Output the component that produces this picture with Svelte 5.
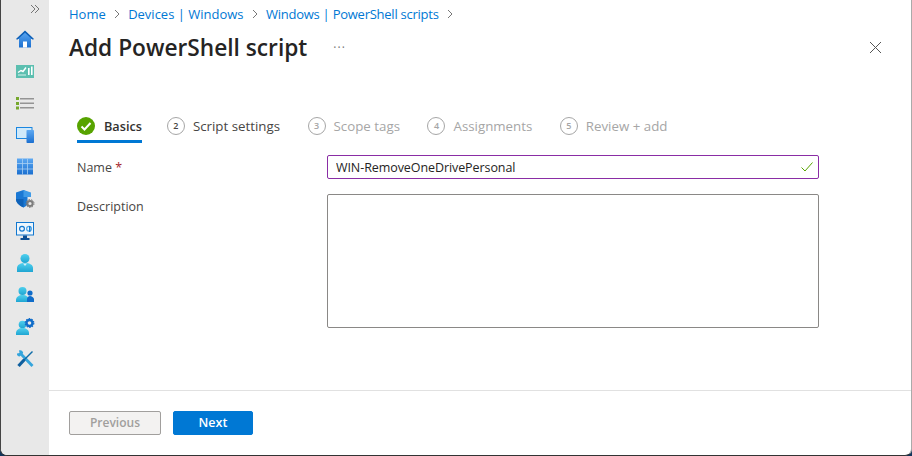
<script>
	const crumbs = [
		{ text: 'Home', long: false },
		{ text: 'Devices | Windows', long: false },
		{ text: 'Windows | PowerShell scripts', long: true }
	];
	const steps = [
		{ n: 2, label: 'Script settings', state: 'upcoming' },
		{ n: 3, label: 'Scope tags', state: 'off' },
		{ n: 4, label: 'Assignments', state: 'off' },
		{ n: 5, label: 'Review + add', state: 'off' }
	];
</script>

<div class="window">
	<nav class="rail">
		<svg class="collapse" width="10" height="10" viewBox="0 0 10 10" fill="none" stroke="#666" stroke-width="0.9"><path d="M1 1l4 4-4 4M5 1l4 4-4 4" /></svg>
		<ul>
			<li><svg viewBox="0 0 18 18" width="18" height="18">
				<defs>
					<linearGradient id="blue" x1="0" y1="0" x2="0" y2="1"><stop offset="0" stop-color="#5ea9f2" /><stop offset="1" stop-color="#1a6fd0" /></linearGradient>
					<linearGradient id="cyan" x1="0" y1="0" x2="0" y2="1"><stop offset="0" stop-color="#4fd0ee" /><stop offset="1" stop-color="#1fa5d2" /></linearGradient>
				</defs>
				<path d="M9 1L0.500 9h2.500v8.500h12V9h2.500z" fill="url(#blue)" /><path d="M9 0.500L0 9l1.200 .8L9 2.800l7.800 7L18 9z" fill="#0f5fb5" /><rect x="7" y="11.500" width="4" height="6" fill="#fff" /></svg></li>
			<li><svg viewBox="0 0 18 18" width="18" height="18"><g transform="translate(0 3)"><rect y="0" width="18" height="13" fill="#5cbfb0" /><path d="M2 7.500l3-2 2 1 3-4" stroke="#fff" fill="none" stroke-width="1.400" /><rect x="12" y="3" width="1.600" height="7" fill="#fff" /><rect x="15" y="1.500" width="1.600" height="8.500" fill="#fff" /><rect x="2" y="9.500" width="8" height="1" fill="#d8f1ec" /></g></svg></li>
			<li><svg viewBox="0 0 18 18" width="18" height="18"><rect x="0" y="3" width="3" height="3" fill="#76a82e" /><rect x="0" y="8" width="3" height="3" fill="#76a82e" /><rect x="0" y="12.500" width="3" height="3" fill="#76a82e" /><rect x="4" y="4" width="14" height="1.500" fill="#949494" /><rect x="4" y="8.500" width="14" height="1.500" fill="#949494" /><rect x="4" y="13" width="14" height="1.500" fill="#949494" /></svg></li>
			<li><svg viewBox="0 0 18 18" width="18" height="18"><rect x="0.500" y="1.500" width="15.500" height="11" fill="#cfe9fa" stroke="#1a86e0" /><rect x="10.500" y="4" width="7.500" height="13" rx="0.800" fill="url(#blue)" /></svg></li>
			<li><svg viewBox="0 0 18 18" width="18" height="18"><rect x="1" y="0.500" width="16" height="16" fill="url(#blue)" /><path d="M6.500 0.500v16M11.500 0.500v16M1 5.500h16M1 11h16" stroke="#a9cff2" stroke-width="0.800" /></svg></li>
			<li><svg viewBox="0 0 18 18" width="18" height="18"><path d="M7.500 0L0 2.500v6.500c0 4 3.500 6.500 7.500 8.500 1.500-.8 3-1.800 4-3V2z" fill="#1a78d4" /><path d="M7.500 0L15 2.500v4.500H7.500z" fill="#3f9be8" /><path d="M0 9h7.500v8.500C3.500 15.500 0 13 0 9z" fill="#0f62b8" /><circle cx="14" cy="13.500" r="2.600" fill="none" stroke="#7d7d7d" stroke-width="2" /><circle cx="14" cy="13.500" r="4" fill="none" stroke="#7d7d7d" stroke-width="1" stroke-dasharray="1.500 1.300" /></svg></li>
			<li><svg viewBox="0 0 18 18" width="18" height="18"><rect x="0.500" y="0.500" width="17" height="12.500" fill="#eef6fc" stroke="#1278d0" /><circle cx="6" cy="6.800" r="2.400" fill="none" stroke="#1278d0" stroke-width="1.200" /><circle cx="13" cy="6.800" r="2.400" fill="none" stroke="#4ca5e8" stroke-width="1.200" /><rect x="13" y="4" width="1.400" height="6" fill="#1278d0" /><path d="M7 13.500h4v2.500h2.500v2h-9v-2H7z" fill="#0c4f94" /></svg></li>
			<li><svg viewBox="0 0 18 18" width="18" height="18"><circle cx="9" cy="4.500" r="4.500" fill="url(#cyan)" /><path d="M1 18v-4c0-3 3-5 8-5s8 2 8 5v4z" fill="url(#cyan)" /><path d="M7 9.500l2 2.500 2-2.500z" fill="#d5f1f9" /></svg></li>
			<li><svg viewBox="0 0 18 18" width="18" height="18"><circle cx="6.500" cy="5" r="4" fill="url(#cyan)" /><path d="M0 16v-2c0-3 3-5 6.500-5s6.500 2 6.500 5v2z" fill="url(#cyan)" /><circle cx="14" cy="7" r="2.600" fill="#0f6cc9" /><path d="M11 16v-3c0-1.500 1.500-3 3-3s4 1.500 4 3v3z" fill="#0f6cc9" /></svg></li>
			<li><svg viewBox="0 0 18 18" width="18" height="18"><circle cx="6.500" cy="6.500" r="3.800" fill="url(#cyan)" /><path d="M0 17v-2c0-3 3-5 6.500-5s6.500 2 6.500 5v2z" fill="url(#cyan)" /><circle cx="13.500" cy="5" r="3" fill="none" stroke="#0f6cc9" stroke-width="2.400" /><circle cx="13.500" cy="5" r="4.300" fill="none" stroke="#0f6cc9" stroke-width="1.200" stroke-dasharray="1.500 1.200" /></svg></li>
			<li><svg viewBox="0 0 18 18" width="18" height="18"><path d="M4 3l12.500 13" stroke="#35a5dc" stroke-width="2.800" /><path d="M1 3.500l2.500-.5L3 .5c2-.8 4 .5 4.200 2.500l-3.500 3.500C1.800 6.500 .5 5 1 3.500z" fill="#35a5dc" /><path d="M16.500 1.500L8 10" stroke="#0f6ca8" stroke-width="1.400" /><path d="M8.500 9.500L2.500 16" stroke="#0f5f9e" stroke-width="3.200" /></svg></li>
		</ul>
	</nav>

	<main class="pane">
		<div class="head">
			<div class="crumbs">
				{#each crumbs as c}
					<span class="crumb" class:long={c.long}>{c.text}</span>
					<svg class="sep" width="6" height="10" viewBox="0 0 6 10" fill="none" stroke="#777"><path d="M1 1l4 4-4 4" /></svg>
				{/each}
			</div>
			<div class="title-row">
				<h1>Add PowerShell script</h1>
				<span class="more">···</span>
				<svg class="close" width="13" height="13" viewBox="0 0 13 13" stroke="#555" fill="none"><path d="M1 1l11 11M12 1L1 12" /></svg>
			</div>
		</div>

		<div class="tabs">
			<div class="tab active">
				<svg width="18" height="18" viewBox="0 0 18 18"><circle cx="9" cy="9" r="9" fill="#57a300" /><path d="M4.500 9.500l3 3 6-6.500" stroke="#fff" stroke-width="2" fill="none" /></svg>
				<span>Basics</span>
			</div>
			{#each steps as s}
				<div class="tab {s.state}">
					<span class="num">{s.n}</span>
					<span>{s.label}</span>
				</div>
			{/each}
		</div>

		<div class="form">
			<div class="row name-row">
				<label for="name">Name <span class="req">*</span></label>
				<div class="input">
					<input id="name" value="WIN-RemoveOneDrivePersonal" />
					<svg class="ok" width="12" height="10" viewBox="0 0 12 10" fill="none" stroke="#57a300"><path d="M0.500 5.500l3.500 3.500 7.500-8.500" /></svg>
				</div>
			</div>
			<div class="row">
				<label for="desc">Description</label>
				<textarea id="desc"></textarea>
			</div>
		</div>

		<footer>
			<button class="prev" disabled>Previous</button>
			<button class="next">Next</button>
		</footer>
	</main>
</div>

<style>
	:global(body) {
		margin: 0;
		background: #12355b;
	}

	.window {
		display: flex;
		box-sizing: border-box;
		width: 912px;
		height: 456px;
		background: #fff;
		border-left: 1px solid #444;
		border-bottom: 1px solid #333;
		border-right: 1px solid #aaa;
		border-bottom-left-radius: 7px;
		border-bottom-right-radius: 7px;
		overflow: hidden;
		font-family: "Open Sans", "Liberation Sans", sans-serif;
		font-size: 12.5px;
		color: #323130;
	}

	.rail {
		width: 48px;
		flex: none;
		background: #e8e8e8;
	}

	.collapse {
		display: block;
		margin: 4px 0 0 29px;
	}

	.rail ul {
		list-style: none;
		margin: 16px 0 0;
		padding: 0;
		display: flex;
		flex-direction: column;
		gap: 14px;
		align-items: center;
	}

	.rail li {
		height: 18px;
		width: 18px;
	}

	.rail li svg {
		display: block;
		overflow: visible;
	}

	.pane {
		flex: 1;
		display: flex;
		flex-direction: column;
		min-width: 0;
	}

	.head {
		padding: 5px 29px 0 20px;
	}

	.crumbs {
		display: flex;
		align-items: center;
		gap: 8.2px;
		height: 18px;
		font-size: 13px;
		color: #0078d4;
	}

	.crumb.long {
		letter-spacing: -0.25px;
	}

	.title-row {
		display: flex;
		align-items: center;
		margin-top: 9px;
		height: 30px;
	}

	h1 {
		margin: 0;
		font-size: 22.7px;
		font-weight: 600;
		color: #252423;
	}

	.more {
		margin-left: 26px;
		font-size: 12px;
		letter-spacing: 1px;
		color: #777;
	}

	.close {
		margin-left: auto;
	}

	.tabs {
		display: flex;
		gap: 27.5px;
		margin: 55px 0 0 28px;
		height: 38px;
		font-size: 13.3px;
	}

	.tab {
		display: flex;
		align-items: flex-start;
		gap: 8px;
		box-sizing: border-box;
		height: 26px;
		line-height: 18px;
	}

	.tab.active {
		border-bottom: 3px solid #0078d4;
		margin-right: -2.5px;
		font-size: 12.7px;
		font-weight: 600;
		gap: 9px;
		color: #323130;
	}

	.tab.upcoming {
		color: #484644;
	}

	.tab.off {
		color: #a6a6a6;
	}

	.num {
		box-sizing: border-box;
		width: 18px;
		height: 18px;
		border: 1px solid #a6a6a6;
		border-radius: 50%;
		font-size: 9px;
		line-height: 15px;
		text-align: center;
		font-weight: 600;
	}

	.form {
		padding: 0 0 0 28px;
		display: flex;
		flex-direction: column;
		gap: 15px;
	}

	.row {
		display: flex;
		align-items: flex-start;
	}

	label {
		box-sizing: border-box;
		width: 250px;
		height: 24px;
		flex: none;
		padding-top: 1px;
		line-height: 23px;
		color: #484644;
	}

	.req {
		color: #a4262c;
	}

	.input {
		position: relative;
		width: 492px;
	}

	input {
		display: block;
		box-sizing: border-box;
		width: 100%;
		height: 24px;
		padding: 0 8px;
		border: 1px solid #8a2da5;
		border-radius: 2px;
		font: inherit;
		letter-spacing: -0.08px;
		color: #252423;
		outline: none;
	}

	.ok {
		position: absolute;
		right: 6px;
		top: 7px;
	}

	textarea {
		display: block;
		box-sizing: border-box;
		width: 492px;
		height: 134px;
		border: 1px solid #8a8886;
		border-radius: 2px;
		resize: none;
		outline: none;
	}

	footer {
		box-sizing: border-box;
		margin-top: auto;
		height: 65px;
		border-top: 1px solid #e1e1e1;
		padding: 20px 0 0 20px;
		display: flex;
		align-items: flex-start;
		gap: 12px;
	}

	button {
		box-sizing: border-box;
		height: 24px;
		border-radius: 2px;
		font: inherit;
		font-weight: 600;
		padding: 0 0 2px;
	}

	.prev {
		width: 92px;
		background: #f3f2f1;
		border: 1px solid #a19f9d;
		color: #a19f9d;
		font-size: 12px;
	}

	.next {
		width: 80px;
		background: #0078d4;
		border: 1px solid #0078d4;
		color: #fff;
	}
</style>
